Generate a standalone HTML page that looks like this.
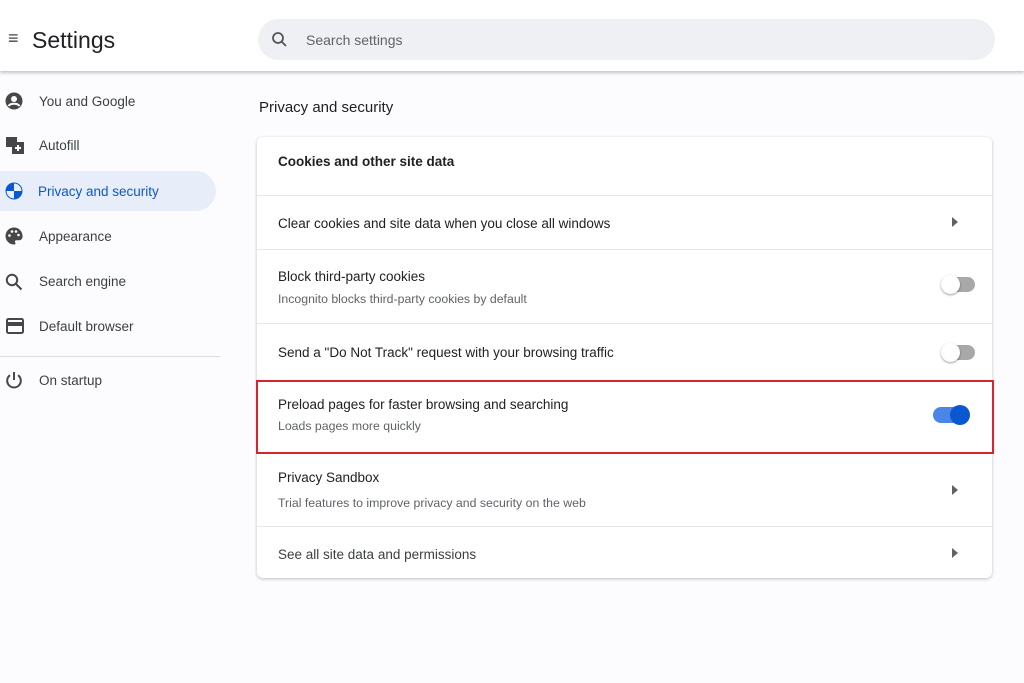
<!DOCTYPE html><html><head><style>
body{margin:0;width:1024px;height:683px;background:#fcfcfe;font-family:"Liberation Sans",sans-serif;position:relative;overflow:hidden;color:#202124}
.a{position:absolute;white-space:nowrap}
.hdr{position:absolute;left:0;top:0;width:1024px;height:71px;background:#fff;box-shadow:0 2px 3px rgba(0,0,0,.22)}
.nav{font-size:13.5px;color:#3c4043}
.card{position:absolute;left:257px;top:137px;width:735px;height:441px;background:#fff;border-radius:6px;box-shadow:0 1px 3px rgba(0,0,0,.25)}
.ln{position:absolute;left:257px;width:735px;height:1px;background:#e6e6e8}
.t{font-size:13.5px;color:#202124}.s{font-size:12.3px;color:#5f6368}
.tog{position:absolute;width:33px;height:15px;border-radius:8px;background:#a8a8a8}
.tog i{position:absolute;top:-2px;width:19px;height:19px;border-radius:50%;background:#fff;box-shadow:0 1px 2px rgba(0,0,0,.4)}
.arr{position:absolute;width:0;height:0;border-left:6px solid #5f6368;border-top:5px solid transparent;border-bottom:5px solid transparent}
</style></head><body>
<div class="hdr"></div>
<div class="a" style="left:8px;top:28px;font-size:18px;color:#444">≡</div>
<div class="a" style="left:32px;top:27px;font-size:23px;color:#202124">Settings</div>
<div class="a" style="left:258px;top:19px;width:737px;height:41px;border-radius:21px;background:#eef0f4"></div>
<svg class="a" style="left:271px;top:31px" width="17" height="17" viewBox="0 0 17 17"><circle cx="7" cy="7" r="5" fill="none" stroke="#555" stroke-width="1.8"/><path d="M10.5 10.5L15 15" stroke="#555" stroke-width="1.8"/></svg>
<div class="a" style="left:306px;top:32px;font-size:14px;color:#5f6368">Search settings</div>
<div class="a" style="left:0;top:171px;width:216px;height:40px;border-radius:0 20px 20px 0;background:#e7eef9"></div>
<svg class="a" style="left:5px;top:92px" width="18" height="18" viewBox="0 0 18 18"><circle cx="9" cy="9" r="8.5" fill="#474747"/><circle cx="9" cy="7" r="3" fill="#fff"/><path d="M3.5 14c2-3 9-3 11 0" stroke="#fff" stroke-width="2" fill="none"/></svg>
<div class="a nav" style="left:39px;top:94px">You and Google</div>
<svg class="a" style="left:6px;top:137px" width="18" height="18" viewBox="0 0 18 18"><rect x="0" y="0" width="11" height="10" fill="#474747"/><rect x="6" y="5" width="12" height="12" fill="#474747"/><path d="M12 8v6M9 11h6" stroke="#fff" stroke-width="2"/></svg>
<div class="a nav" style="left:39px;top:138px">Autofill</div>
<svg class="a" style="left:5px;top:182px" width="18" height="18" viewBox="0 0 18 18"><circle cx="9" cy="9" r="8.5" fill="#0b57d0"/><path d="M9 1.5A7.5 7.5 0 0 1 16.5 9H9zM9 9v7.5A7.5 7.5 0 0 1 1.5 9z" fill="#e7eef9"/></svg>
<div class="a nav" style="left:38px;top:184px;color:#0b57d0">Privacy and security</div>
<svg class="a" style="left:5px;top:227px" width="18" height="18" viewBox="0 0 18 18"><path d="M9 .5A8.5 8.5 0 0 0 9 17.5c1.5 0 1.8-1.2 1.2-2-.8-1 0-2.3 1.3-2.3H14A3.5 3.5 0 0 0 17.5 9 8.5 8.5 0 0 0 9 .5z" fill="#474747"/><circle cx="4.5" cy="8.5" r="1.3" fill="#fff"/><circle cx="7" cy="4.5" r="1.3" fill="#fff"/><circle cx="11" cy="4.5" r="1.3" fill="#fff"/><circle cx="13.5" cy="8" r="1.3" fill="#fff"/></svg>
<div class="a nav" style="left:39px;top:229px">Appearance</div>
<svg class="a" style="left:5px;top:273px" width="18" height="18" viewBox="0 0 18 18"><circle cx="7" cy="7" r="5.2" fill="none" stroke="#474747" stroke-width="2"/><path d="M11 11l5.5 5.5" stroke="#474747" stroke-width="2"/></svg>
<div class="a nav" style="left:39px;top:274px">Search engine</div>
<svg class="a" style="left:6px;top:318px" width="18" height="16" viewBox="0 0 18 16"><rect x="1" y="1" width="16" height="14" rx="1.5" fill="none" stroke="#474747" stroke-width="2"/><rect x="1" y="4" width="16" height="4" fill="#474747"/></svg>
<div class="a nav" style="left:39px;top:319px">Default browser</div>
<div class="a" style="left:0;top:356px;width:220px;height:1px;background:#dadce0"></div>
<svg class="a" style="left:5px;top:371px" width="18" height="18" viewBox="0 0 18 18"><path d="M5 4.2A6.8 6.8 0 1 0 13 4.2" fill="none" stroke="#474747" stroke-width="2"/><path d="M9 1v8" stroke="#474747" stroke-width="2"/></svg>
<div class="a nav" style="left:39px;top:373px">On startup</div>
<div class="a" style="left:259px;top:99px;font-size:15px;color:#202124">Privacy and security</div>
<div class="card"></div>
<div class="a t" style="left:278px;top:154px;font-weight:bold">Cookies and other site data</div>
<div class="ln" style="top:195px"></div>
<div class="a t" style="left:278px;top:216px">Clear cookies and site data when you close all windows</div>
<div class="arr" style="left:952px;top:217px"></div>
<div class="ln" style="top:249px"></div>
<div class="a t" style="left:278px;top:269px">Block third-party cookies</div>
<div class="a s" style="left:278px;top:292px">Incognito blocks third-party cookies by default</div>
<div class="tog" style="left:942px;top:277px"><i style="left:-1px"></i></div>
<div class="ln" style="top:323px"></div>
<div class="a t" style="left:278px;top:345px">Send a "Do Not Track" request with your browsing traffic</div>
<div class="tog" style="left:942px;top:345px"><i style="left:-1px"></i></div>
<div class="a t" style="left:278px;top:397px">Preload pages for faster browsing and searching</div>
<div class="a s" style="left:278px;top:419px">Loads pages more quickly</div>
<div class="tog" style="left:933px;top:407px;width:36px;height:16px;background:#4a86e8"><i style="left:17px;top:-2px;width:20px;height:20px;background:#0b57d0;box-shadow:none"></i></div>
<div class="a" style="left:256px;top:380px;width:734px;height:70px;border:2px solid #d9232e"></div>
<div class="a t" style="left:278px;top:470px">Privacy Sandbox</div>
<div class="a s" style="left:278px;top:496px">Trial features to improve privacy and security on the web</div>
<div class="arr" style="left:952px;top:485px"></div>
<div class="ln" style="top:526px"></div>
<div class="a t" style="left:278px;top:547px;color:#3c4043">See all site data and permissions</div>
<div class="arr" style="left:952px;top:548px"></div>
</body></html>
